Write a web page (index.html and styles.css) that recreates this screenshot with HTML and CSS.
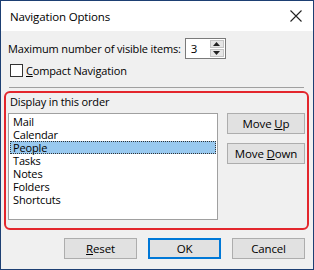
FILE: index.html
```html
<!DOCTYPE html>
<html lang="en">
<head>
    <meta charset="UTF-8">
    <title>Navigation Options</title>
    <link rel="stylesheet" href="styles.css">
</head>
<body>
    <div class="window">
        <div class="titlebar">
            <span class="title">Navigation Options</span>
            <svg class="close" width="12" height="12" viewBox="0 0 12 12">
                <path d="M0.5 0.5 L11.5 11.5 M11.5 0.5 L0.5 11.5" stroke="#222" stroke-width="1.1" fill="none"/>
            </svg>
        </div>
        <div class="content">
            <div class="max-row">
                <span>Maximum number of visible items:</span>
                <div class="spin">
                    <span class="spin-value">3</span>
                    <div class="spin-btns">
                        <span class="spin-btn"><svg width="7" height="4" viewBox="0 0 7 4"><path d="M3.5 0 L7 4 L0 4 Z" fill="#222"/></svg></span>
                        <span class="spin-btn"><svg width="7" height="4" viewBox="0 0 7 4"><path d="M0 0 L7 0 L3.5 4 Z" fill="#222"/></svg></span>
                    </div>
                </div>
            </div>
            <label class="check-row">
                <span class="checkbox"></span>
                <span><u>C</u>ompact Navigation</span>
            </label>
            <div class="separator"></div>
            <div class="group">
                <div class="group-label">Display in this order</div>
                <div class="group-body">
                    <ul class="listbox">
                        <li>Mail</li>
                        <li>Calendar</li>
                        <li class="selected">People</li>
                        <li>Tasks</li>
                        <li>Notes</li>
                        <li>Folders</li>
                        <li>Shortcuts</li>
                    </ul>
                    <div class="side-buttons">
                        <button class="btn">Move <u>U</u>p</button>
                        <button class="btn">Move <u>D</u>own</button>
                    </div>
                </div>
            </div>
            <div class="footer">
                <button class="btn footer-btn"><u>R</u>eset</button>
                <button class="btn footer-btn default">OK</button>
                <button class="btn footer-btn">Cancel</button>
            </div>
        </div>
    </div>
</body>
</html>
```

FILE: styles.css
```css
* {
    box-sizing: border-box;
}

body {
    margin: 0;
    font-family: 'Open Sans', 'Noto Sans', sans-serif;
    font-size: 11px;
    letter-spacing: -0.15px;
    color: #000;
    background-color: #f0f0f0;
}

.window {
    width: 314px;
    height: 270px;
    border: 1px solid #1d3f73;
    background-color: #f0f0f0;
    display: flex;
    flex-direction: column;
}

.titlebar {
    height: 30px;
    background-color: #fff;
    display: flex;
    align-items: center;
    justify-content: space-between;
    padding: 0 11px 0 9px;
}

.title {
    font-size: 11.5px;
}

.close {
    display: block;
}

.content {
    flex: 1;
    padding: 6px 4px 0 3px;
    display: flex;
    flex-direction: column;
}

.max-row {
    display: flex;
    align-items: center;
    gap: 4px;
    padding-left: 4px;
    height: 22px;
}

.spin {
    display: flex;
    width: 41px;
    height: 21px;
    border: 1px solid #7a7a7a;
    background-color: #fff;
}

.spin-value {
    flex: 1;
    padding-left: 5px;
    line-height: 19px;
    font-size: 11.5px;
}

.spin-btns {
    display: flex;
    flex-direction: column;
    width: 16px;
    padding: 1px;
    gap: 1px;
}

.spin-btn {
    flex: 1;
    background-color: #e6e6e6;
    border: 1px solid #c4c4c4;
    display: flex;
    align-items: center;
    justify-content: center;
}

.spin-btn svg {
    display: block;
}

.check-row {
    display: flex;
    align-items: center;
    gap: 3px;
    padding-left: 6px;
    margin-top: 3px;
    height: 17px;
}

.checkbox {
    width: 13px;
    height: 13px;
    border: 1px solid #333;
    background-color: #fff;
}

.separator {
    height: 1px;
    background-color: #a0a0a0;
    margin: 8px 5px 0 5px;
}

.group {
    margin-top: 3px;
    border: 2px solid #e3262c;
    border-radius: 6px;
    padding: 1px 2px 0 2px;
    height: 139px;
}

.group-label {
    height: 16px;
    line-height: 16px;
    padding-left: 2px;
}

.group-body {
    display: flex;
    margin-top: 3px;
}

.listbox {
    list-style: none;
    margin: 0;
    padding: 1px;
    width: 210px;
    height: 107px;
    background-color: #fff;
    border: 1px solid #a0a0a0;
}

.listbox li {
    height: 13px;
    line-height: 11px;
    padding-left: 2px;
    border: 1px dotted transparent;
}

.listbox li.selected {
    background-color: #99c9ef;
    border-color: #333;
}

.side-buttons {
    display: flex;
    flex-direction: column;
    gap: 9px;
    margin-left: 9px;
}

.btn {
    font-family: inherit;
    font-size: 11.5px;
    letter-spacing: inherit;
    color: #000;
    background-color: #e1e1e1;
    border: 1px solid #adadad;
    border-radius: 0;
    padding: 0;
    margin: 0;
    width: 78px;
    height: 21px;
    line-height: 19px;
}

.footer {
    display: flex;
    justify-content: flex-end;
    gap: 11px;
    padding-top: 8px;
    padding-right: 4px;
}

.footer-btn {
    width: 73px;
    height: 21px;
}

.default {
    border: 2px solid #0078d7;
    line-height: 17px;
}
```
